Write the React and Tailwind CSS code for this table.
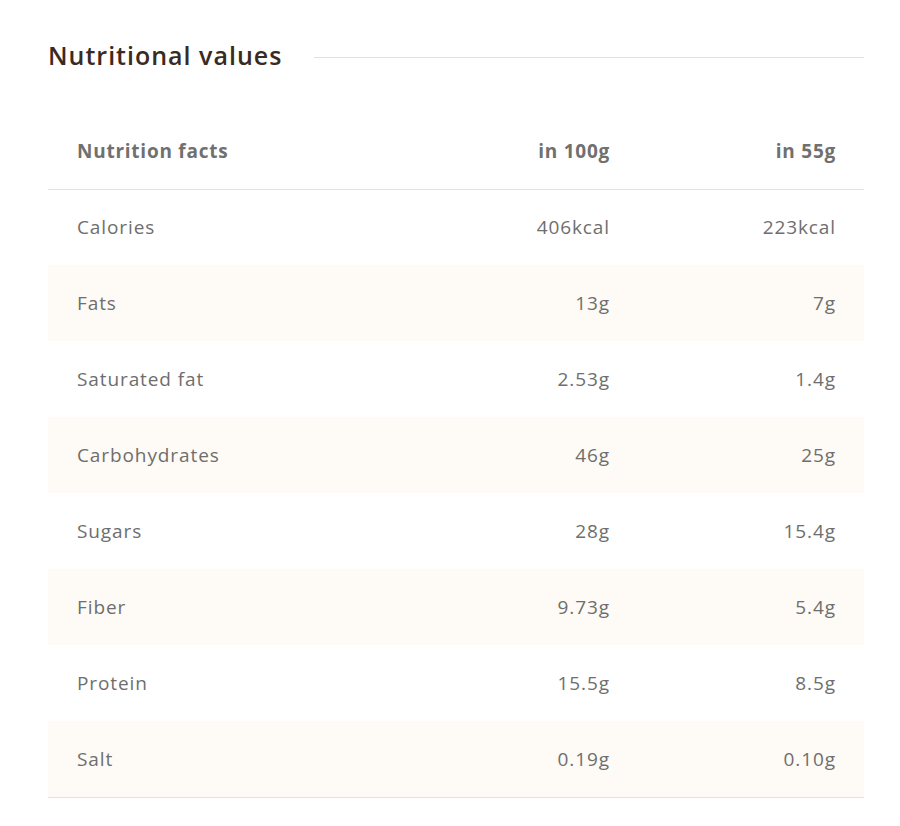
import React from 'react';

const rows = [
  { name: 'Calories', per100: '406kcal', perServing: '223kcal' },
  { name: 'Fats', per100: '13g', perServing: '7g' },
  { name: 'Saturated fat', per100: '2.53g', perServing: '1.4g' },
  { name: 'Carbohydrates', per100: '46g', perServing: '25g' },
  { name: 'Sugars', per100: '28g', perServing: '15.4g' },
  { name: 'Fiber', per100: '9.73g', perServing: '5.4g' },
  { name: 'Protein', per100: '15.5g', perServing: '8.5g' },
  { name: 'Salt', per100: '0.19g', perServing: '0.10g' },
];

const App = () => {
  return (
    <div className="min-h-screen bg-white pl-12 pr-9 pt-[38px] font-['Open_Sans',sans-serif]">
      <div className="flex items-center gap-8">
        <h2 className="text-[25px] font-semibold text-[#3a2a22] tracking-[1px] leading-[34px]">
          Nutritional values
        </h2>
        <div className="flex-1 h-px bg-[#e6e1cf] mt-1" />
      </div>

      <table className="mt-[41px] w-full border-collapse text-[19px] tracking-[0.9px]">
        <thead>
          <tr className="h-[76px] border-b border-[#e8e2cc]">
            <th className="pl-[29px] text-left font-bold text-[#707070] tracking-[0.75px] w-[364px]">Nutrition facts</th>
            <th className="pr-[28px] text-right font-bold text-[#707070] tracking-[0.75px]">in 100g</th>
            <th className="pr-[28px] text-right font-bold text-[#707070] tracking-[0.75px] w-[226px]">in 55g</th>
          </tr>
        </thead>
        <tbody>
          {rows.map((row, i) => (
            <tr
              key={row.name}
              className={`h-[76px] ${i % 2 === 1 ? 'bg-[#fefaf5]' : 'bg-white'} ${i === rows.length - 1 ? 'border-b border-[#ebe3c9]' : ''}`}
            >
              <td className="pl-[29px] text-left text-[#6e6e6e]">{row.name}</td>
              <td className="pr-[28px] text-right text-[#6e6e6e]">{row.per100}</td>
              <td className="pr-[28px] text-right text-[#6e6e6e]">{row.perServing}</td>
            </tr>
          ))}
        </tbody>
      </table>
    </div>
  );
};

export default App;
